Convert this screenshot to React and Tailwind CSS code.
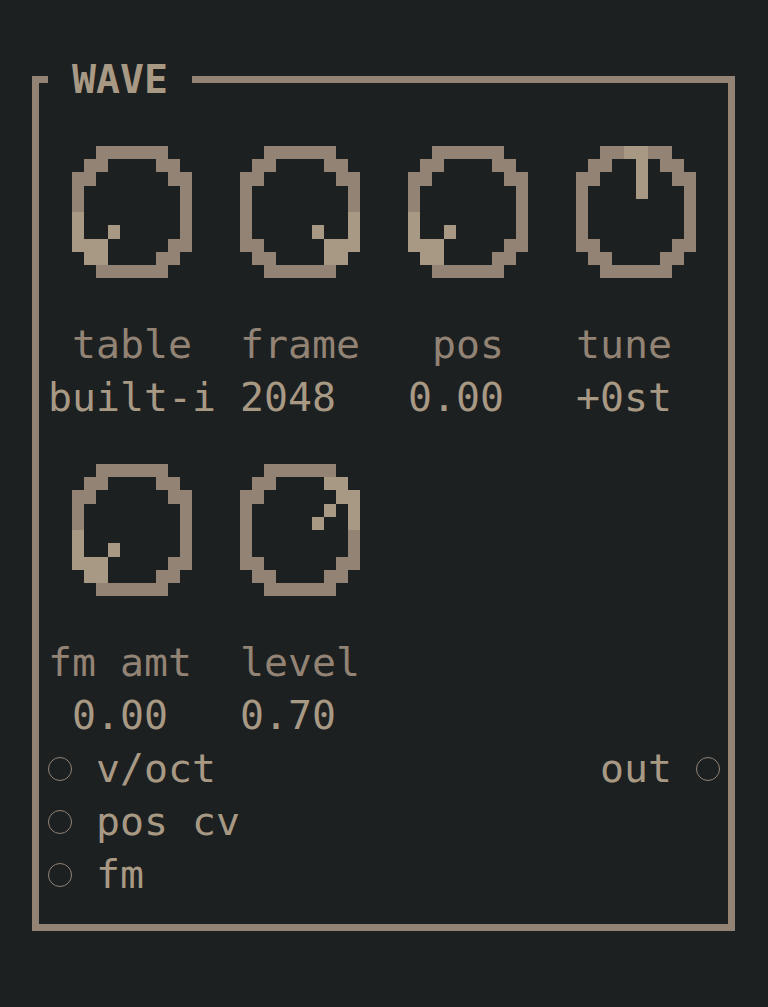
const RING = [
  [0, [2, 3, 4, 5, 6, 7]],
  [1, [1, 2, 7, 8]],
  [2, [0, 1, 8, 9]],
  [3, [0, 9]],
  [4, [0, 9]],
  [5, [0, 9]],
  [6, [0, 9]],
  [7, [0, 1, 8, 9]],
  [8, [1, 2, 7, 8]],
  [9, [2, 3, 4, 5, 6, 7]],
];

// lit pixels as [row, col]
const MIN = [[5, 0], [6, 0], [7, 0], [7, 1], [7, 2], [8, 1], [8, 2], [6, 3]];
const MAX = [[5, 9], [6, 9], [7, 9], [7, 8], [7, 7], [8, 8], [8, 7], [6, 6]];
const MID = [[0, 4], [0, 5], [1, 5], [2, 5], [3, 5]];
const SEVENTY = [[1, 7], [1, 8], [2, 8], [2, 9], [3, 9], [4, 9], [3, 7], [4, 6]];

function Knob({ lit }) {
  return (
    <svg
      width="120"
      height="212"
      viewBox="0 0 10 16"
      preserveAspectRatio="none"
      shapeRendering="crispEdges"
      className="ml-[24px] block"
    >
      {RING.map(([r, cols]) =>
        cols.map(c => <rect key={`${r}-${c}`} x={c} y={r + 3} width="1" height="1" fill="#928374" />)
      )}
      {lit.map(([r, c]) => (
        <rect key={`l${r}-${c}`} x={c} y={r + 3} width="1" height="1" fill="#a89984" />
      ))}
    </svg>
  );
}

function Port({ label, right }) {
  const dot = <span className="block w-[24px] h-[24px] rounded-full border-[1.5px] border-[#928374]" />;
  return right ? (
    <div className="flex items-center gap-[24px]">
      <span className="text-[#a89984]">{label}</span>
      {dot}
    </div>
  ) : (
    <div className="flex items-center gap-[24px]">
      {dot}
      <span className="text-[#a89984] whitespace-pre">{label}</span>
    </div>
  );
}

export default function App() {
  const row1 = [
    { lit: MIN, label: ' table', value: 'built-i' },
    { lit: MAX, label: ' frame', value: ' 2048' },
    { lit: MIN, label: '  pos', value: ' 0.00' },
    { lit: MID, label: ' tune', value: ' +0st' },
  ];
  const row2 = [
    { lit: MIN, label: 'fm amt', value: ' 0.00' },
    { lit: SEVENTY, label: ' level', value: ' 0.70' },
  ];

  const KnobRow = ({ items }) => (
    <>
      <div className="flex h-[212px]">
        {items.map((k, i) => (
          <div key={i} className="w-[168px]">
            <Knob lit={k.lit} />
          </div>
        ))}
      </div>
      <div className="flex h-[53px]">
        {items.map((k, i) => (
          <span key={i} className="w-[168px] whitespace-pre text-[#928374]">{k.label}</span>
        ))}
      </div>
      <div className="flex h-[53px]">
        {items.map((k, i) => (
          <span key={i} className="w-[168px] whitespace-pre text-[#a89984]">{k.value}</span>
        ))}
      </div>
    </>
  );

  return (
    <div className="min-h-screen w-full bg-[#1d2021] pt-[76px] pl-[32px] font-['DejaVu_Sans_Mono','Liberation_Mono',monospace] text-[39.86px] leading-[53px]">
      <div className="relative box-border w-[703px] h-[855px] border-[7px] border-[#928374] pl-[9px] pt-[23px]">
        <div className="absolute left-[9px] top-[-30px] h-[53px] bg-[#1d2021] px-[24px] font-bold text-[#a89984]">
          WAVE
        </div>

        <KnobRow items={row1} />
        <KnobRow items={row2} />

        <div className="w-[672px]">
          <div className="flex h-[53px] items-center justify-between">
            <Port label="v/oct" />
            <Port label="out" right />
          </div>
          <div className="flex h-[53px] items-center">
            <Port label="pos cv" />
          </div>
          <div className="flex h-[53px] items-center">
            <Port label="fm" />
          </div>
        </div>
      </div>
    </div>
  );
}
